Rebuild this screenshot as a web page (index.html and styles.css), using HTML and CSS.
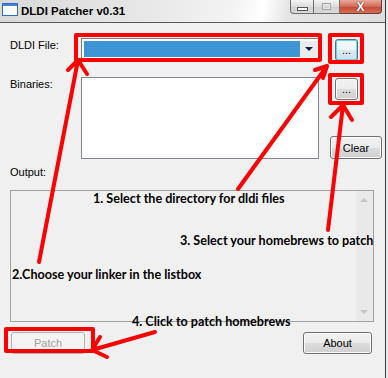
FILE: index.html
```html
<!DOCTYPE html>
<html lang="en">
<head>
    <meta charset="UTF-8">
    <title>DLDI Patcher v0.31</title>
    <link rel="stylesheet" href="styles.css">
</head>
<body>
    <div class="window">
        <div class="titlebar">
            <svg class="app-icon" width="16" height="13" viewBox="0 0 16 13">
                <rect x="0.5" y="0.5" width="15" height="12" fill="#fff" stroke="#2c6fc8"/>
                <rect x="1" y="1" width="14" height="2" fill="#3d86dc"/>
            </svg>
            <span class="title">DLDI Patcher v0.31</span>
            <div class="caption">
                <span class="cap cap-min"><i></i></span>
                <span class="cap cap-max"><i></i></span>
                <span class="cap cap-close">X</span>
            </div>
        </div>

        <div class="client">
            <div class="row row-file">
                <label class="lbl">DLDI File:</label>
                <div class="combo">
                    <div class="combo-value"></div>
                    <div class="combo-arrow"></div>
                </div>
                <button class="btn btn-browse focused">...</button>
            </div>

            <div class="row row-bin">
                <label class="lbl">Binaries:</label>
                <div class="listbox"></div>
                <div class="side">
                    <button class="btn btn-browse">...</button>
                    <button class="btn btn-clear">Clear</button>
                </div>
            </div>

            <div class="lbl output-label">Output:</div>
            <div class="output">
                <div class="scrollbar">
                    <span class="sb-up"></span>
                    <span class="sb-down"></span>
                </div>
            </div>

            <div class="row row-actions">
                <button class="btn btn-patch" disabled>Patch</button>
                <button class="btn btn-about">About</button>
            </div>
        </div>

        <!-- tutorial markup drawn over the dialog -->
        <div class="annotations">
            <svg width="388" height="378" viewBox="0 0 388 378">
                <g fill="none" stroke="#ff0000" stroke-width="4" stroke-linecap="round" stroke-linejoin="round">
                    <rect x="76" y="35" width="244" height="25"/>
                    <rect x="330" y="35" width="32" height="27"/>
                    <rect x="330" y="75" width="32" height="28"/>
                    <rect x="6" y="329" width="87" height="22"/>

                    <path d="M238 189 L327 66 M315 70 L327 66 L323 78"/>
                    <path d="M39 262 L78 60 M68 70 L78 60 L87 74"/>
                    <path d="M328 230 L343 105 M331 117 L343 105 L352 120"/>
                    <path d="M155 332 L92 350 M100 337 L92 350 L107 357"/>
                </g>
            </svg>
            <span class="note note-1">1. Select the directory for dldi files</span>
            <span class="note note-3">3. Select your homebrews to patch</span>
            <span class="note note-2">2.Choose your linker in the listbox</span>
            <span class="note note-4">4. Click to patch homebrews</span>
        </div>
    </div>
</body>
</html>
```

FILE: styles.css
```css
body {
    margin: 0;
    background-color: #e9ebee;
    font-family: "Liberation Sans", Arial, sans-serif;
    font-size: 11px;
}

.window {
    position: relative;
    width: 385px;
    height: 378px;
    border-right: 1px solid #3a3a3a;
    background-color: #f0f0f0;
    overflow: hidden;
}

/* title bar */
.titlebar {
    display: flex;
    align-items: flex-start;
    height: 22px;
    padding-right: 3px;
    border-bottom: 1px solid #5a5a5a;
    background: linear-gradient(100deg, #d9d9d9 0%, #e6e6e6 35%, #f3f3f3 60%, #ffffff 68%, #e4e4e4 75%, #dedede 100%);
}

.app-icon {
    margin: 3px 0 0 2px;
}

.title {
    margin: 4px 0 0 3px;
    font-weight: bold;
    font-size: 11.5px;
    line-height: 14px;
    color: #000;
}

.caption {
    display: flex;
    margin-left: auto;
}

.cap {
    display: flex;
    align-items: center;
    justify-content: center;
    height: 13px;
    border: 1px solid #6f6f6f;
    border-top: none;
    background: linear-gradient(#f4f4f4, #dcdcdc 50%, #cfcfcf 51%, #dadada);
}

.cap-min {
    width: 22px;
    border-radius: 0 0 0 4px;
}

.cap-min i {
    width: 9px;
    height: 2px;
    margin-top: 4px;
    border: 1px solid #555;
    background: #fff;
}

.cap-max {
    width: 25px;
    border-left: none;
}

.cap-max i {
    width: 7px;
    height: 5px;
    border: 1px solid #a4a4a4;
    box-shadow: inset 0 0 0 1px #e6e6e6;
}

.cap-close {
    width: 41px;
    border-left: none;
    border-color: #6a3a36;
    border-radius: 0 0 4px 0;
    background: linear-gradient(#e9a99a, #d26a58 50%, #c5452f 51%, #d8715c);
    color: #fff;
    font-weight: bold;
    font-size: 12px;
    line-height: 12px;
    text-shadow: 0 0 1px #2a2a2a, 0 0 1px #2a2a2a;
}

/* dialog body */
.client {
    padding: 15px 13px 0 10px;
}

.row {
    display: flex;
    align-items: flex-start;
}

.row > * {
    flex-shrink: 0;
}

.lbl {
    width: 71px;
    padding-top: 1px;
    line-height: 13px;
    color: #000;
}

.combo {
    display: flex;
    width: 238px;
    height: 21px;
    box-sizing: border-box;
    padding: 2px 1px 1px 2px;
    border: 1px solid #7a7a7a;
    background: #fff;
}

.combo-value {
    flex: 1;
    background-color: #3c96d6;
}

.combo-arrow {
    position: relative;
    width: 17px;
    background: #ebebeb;
}

.combo-arrow::after {
    content: "";
    position: absolute;
    left: 5px;
    top: 6px;
    border-left: 4px solid transparent;
    border-right: 4px solid transparent;
    border-top: 4px solid #0c1c5a;
}

.btn {
    box-sizing: border-box;
    padding: 0;
    border: 1px solid #707070;
    border-radius: 3px;
    background: linear-gradient(#f2f2f2, #ebebeb 50%, #dddddd 51%, #cfcfcf);
    box-shadow: inset 0 0 0 1px #fbfbfb;
    font-family: inherit;
    font-size: 11px;
    color: #000;
}

.btn-browse {
    width: 23px;
    height: 22px;
    line-height: 18px;
    margin-top: 1px;
}

.row-file .btn-browse {
    margin-left: 16px;
}

.btn-browse.focused {
    border-color: #5d6f7c;
    box-shadow: inset 0 0 0 1px #5fd6f6;
    background: linear-gradient(#f4fbfe, #ebf5fa 50%, #dde9f0 51%, #d1e0e8);
}

.row-bin {
    margin-top: 16px;
}

.listbox {
    width: 238px;
    height: 82px;
    box-sizing: border-box;
    border: 1px solid #828790;
    background: #fff;
}

.side {
    display: flex;
    flex-direction: column;
    align-items: flex-start;
    width: 52px;
    margin-left: 11px;
}

.side .btn-browse {
    margin-left: 5px;
}

.btn-clear {
    width: 52px;
    height: 23px;
    margin-top: 36px;
}

.output-label {
    margin-top: 6px;
}

.output {
    position: relative;
    width: 364px;
    height: 132px;
    box-sizing: border-box;
    margin-top: 11px;
    border: 1px solid #a0a0a0;
    background: #f0f0f0;
}

.scrollbar {
    position: absolute;
    right: 0;
    top: 0;
    bottom: 0;
    width: 17px;
    background: #e9e9e9;
}

.sb-up,
.sb-down {
    position: absolute;
    left: 4px;
    border-left: 4px solid transparent;
    border-right: 4px solid transparent;
}

.sb-up {
    top: 7px;
    border-bottom: 4px solid #c2c2c2;
}

.sb-down {
    bottom: 7px;
    border-top: 4px solid #c2c2c2;
}

.row-actions {
    justify-content: space-between;
    margin-top: 10px;
}

.btn-patch {
    width: 74px;
    height: 22px;
    margin-left: 1px;
    border-color: #adb2b5;
    background: #f4f4f4;
    box-shadow: none;
    color: #a0a0a0;
}

.btn-about {
    width: 69px;
    height: 22px;
}

/* red tutorial overlay */
.annotations {
    position: absolute;
    left: 0;
    top: 0;
    width: 388px;
    height: 378px;
    pointer-events: none;
}

.annotations svg {
    position: absolute;
    left: 0;
    top: 0;
}

.note {
    position: absolute;
    font-family: Lato, "Liberation Sans", sans-serif;
    font-weight: bold;
    font-size: 12.6px;
    line-height: 14px;
    color: #000;
    white-space: nowrap;
}

.note-1 { left: 93px; top: 192px; }
.note-3 { left: 180px; top: 234px; }
.note-2 { left: 12px; top: 268px; }
.note-4 { left: 132px; top: 315px; }
```
